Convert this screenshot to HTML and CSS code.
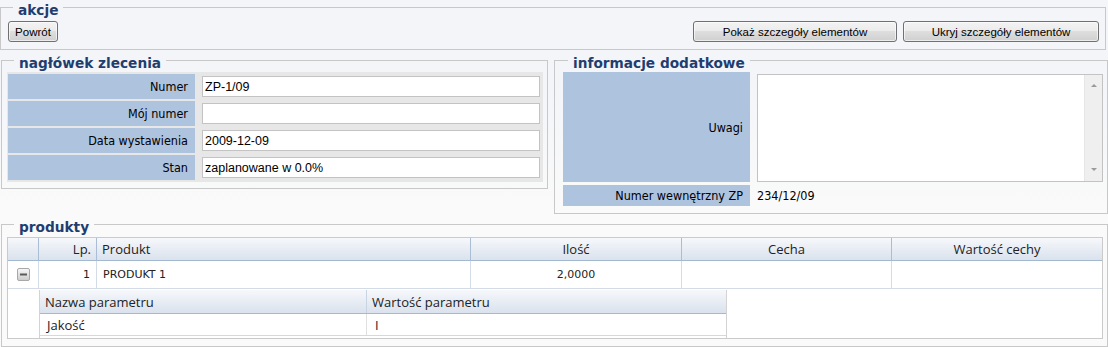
FILE: index.html
```html
<!DOCTYPE html>
<html lang="pl">
<head>
<meta charset="utf-8">
<title>Zlecenie produkcyjne</title>
<link rel="stylesheet" href="styles.css">
</head>
<body>
<div class="page">
  <fieldset class="box box-akcje">
    <legend class="legend">akcje</legend>
    <div class="actions">
      <button class="btn btn-back" type="button">Powrót</button>
      <div class="actions-right">
        <button class="btn btn-show" type="button">Pokaż szczegóły elementów</button>
        <button class="btn btn-hide" type="button">Ukryj szczegóły elementów</button>
      </div>
    </div>
  </fieldset>

  <div class="cols">
    <fieldset class="box box-header">
      <legend class="legend">nagłówek zlecenia</legend>
      <div class="form">
        <div class="lbl">Numer</div>
        <div class="fld"><div class="inp">ZP-1/09</div></div>
        <div class="lbl">Mój numer</div>
        <div class="fld"><div class="inp"></div></div>
        <div class="lbl">Data wystawienia</div>
        <div class="fld"><div class="inp">2009-12-09</div></div>
        <div class="lbl">Stan</div>
        <div class="fld"><div class="inp">zaplanowane w 0.0%</div></div>
      </div>
    </fieldset>

    <fieldset class="box box-info">
      <legend class="legend">informacje dodatkowe</legend>
      <div class="info">
        <div class="lbl lbl-tall">Uwagi</div>
        <div class="ta">
          <div class="sb"><span class="arr-up"></span><span class="arr-down"></span></div>
        </div>
        <div class="lbl lbl-short">Numer wewnętrzny ZP</div>
        <div class="val">234/12/09</div>
      </div>
    </fieldset>
  </div>

  <fieldset class="box box-prod">
    <legend class="legend">produkty</legend>
    <div class="grid">
      <div class="g-row g-head">
        <div class="c"></div>
        <div class="c c-right">Lp.</div>
        <div class="c">Produkt</div>
        <div class="c c-center">Ilość</div>
        <div class="c c-center">Cecha</div>
        <div class="c c-center">Wartość cechy</div>
      </div>
      <div class="g-row g-data">
        <div class="c c-icon">
          <svg class="minus" width="13" height="13" viewBox="0 0 13 13">
            <defs>
              <linearGradient id="mg" x1="0" y1="0" x2="0" y2="1">
                <stop offset="0" stop-color="#f8f8f8"/>
                <stop offset="1" stop-color="#cbcbcb"/>
              </linearGradient>
            </defs>
            <rect x="0.5" y="0.5" width="12" height="12" rx="1.5" fill="url(#mg)" stroke="#a8a8a8"/>
            <rect x="3" y="5.5" width="7" height="2" fill="#5a5a5a"/>
          </svg>
        </div>
        <div class="c c-right">1</div>
        <div class="c">PRODUKT 1</div>
        <div class="c c-center">2,0000</div>
        <div class="c"></div>
        <div class="c"></div>
      </div>
      <div class="g-sub">
        <div class="sub">
          <div class="s-row s-head">
            <div class="c">Nazwa parametru</div>
            <div class="c">Wartość parametru</div>
          </div>
          <div class="s-row s-data">
            <div class="c">Jakość</div>
            <div class="c">I</div>
          </div>
        </div>
      </div>
    </div>
  </fieldset>
</div>
</body>
</html>
```

FILE: styles.css
```css
* { box-sizing: border-box; }

html, body { margin: 0; padding: 0; }

body {
  width: 1108px;
  height: 347px;
  overflow: hidden;
  background: #fafafa linear-gradient(#f3f5f9 0, #f3f5f9 80px, #fafafa 210px) no-repeat;
  font-family: "DejaVu Sans", Verdana, sans-serif;
  font-size: 11px;
  color: #000;
}

/* fieldsets */
.box {
  margin: 0;
  min-width: 0;
  border: 1px solid #c8c8c8;
}

.legend {
  padding: 6px 5px 0;
  font: bold 13.7px/9px "DejaVu Sans", Verdana, sans-serif;
  color: #1f3e70;
}

.box-akcje {
  width: 1106px;
  padding: 6px 6px 7px 7px;
}
.box-akcje .legend { margin-left: 5px; }

.actions {
  display: flex;
  justify-content: space-between;
  align-items: center;
}
.actions-right {
  display: flex;
  gap: 6px;
}

.btn {
  height: 21px;
  padding: 0;
  border: 1px solid #707070;
  border-radius: 3px;
  background: linear-gradient(#f3f3f3 0, #ebebeb 50%, #dedede 50%, #d0d0d0 100%);
  box-shadow: inset 0 0 0 1px rgba(255,255,255,0.6);
  font: 11.5px "Liberation Sans", Arial, sans-serif;
  color: #000;
  text-align: center;
}
.btn-back { width: 50px; }
.btn-show { width: 204px; }
.btn-hide { width: 196px; }

/* two columns */
.cols {
  display: flex;
  align-items: flex-start;
  gap: 6px;
  margin: 3px 0 0 1px;
}

.box-header {
  width: 547px;
  padding: 4px 4px 6px 5px;
}
.box-header .legend { margin-left: 7px; }

.form {
  display: grid;
  grid-template-columns: 187px 1fr;
  row-gap: 2px;
  padding: 2px 3px 2px 1px;
  background: #e7e7e7;
}

.lbl {
  display: flex;
  align-items: center;
  justify-content: flex-end;
  height: 25px;
  padding-right: 7px;
  background: #aec3de;
  font: 12.5px "DejaVu Sans Condensed", "DejaVu Sans", Verdana, sans-serif;
  font-stretch: condensed;
  color: #000;
}

.fld {
  display: flex;
  align-items: center;
  padding-left: 7px;
}

.inp {
  flex: 1;
  height: 21px;
  display: flex;
  align-items: center;
  padding: 0 2px;
  background: #fff;
  border: 1px solid #c3c3c3;
  font: 12.5px "Liberation Sans", Arial, sans-serif;
  color: #000;
}

.box-info {
  flex: 1;
  padding: 4px 4px 7px 8px;
}
.box-info .legend { margin-left: 5px; }

.info {
  display: grid;
  grid-template-columns: 187px 1fr;
  grid-template-rows: 110px 21px;
  column-gap: 7px;
  row-gap: 3px;
}
.lbl-tall { height: 110px; }
.lbl-short { height: 21px; }

.ta {
  margin-top: 2px;
  height: 108px;
  display: flex;
  justify-content: flex-end;
  background: #fff;
  border: 1px solid #c3c3c3;
}
.sb {
  width: 18px;
  display: flex;
  flex-direction: column;
  justify-content: space-between;
  align-items: center;
  padding: 9px 0 10px;
  background: #efefef;
  border-left: 1px solid #e6e6e6;
}
.arr-up {
  width: 0;
  height: 0;
  border-left: 3px solid transparent;
  border-right: 3px solid transparent;
  border-bottom: 3px solid #9a9a9a;
}
.arr-down {
  width: 0;
  height: 0;
  border-left: 3px solid transparent;
  border-right: 3px solid transparent;
  border-top: 3px solid #9a9a9a;
}

.val {
  display: flex;
  align-items: center;
  font: 12.5px "DejaVu Sans Condensed", "DejaVu Sans", Verdana, sans-serif;
  font-stretch: condensed;
  color: #000;
}

/* products */
.box-prod {
  margin: 3px 0 0 1px;
  padding: 5px 4px 7px 5px;
}
.box-prod .legend { margin-left: 7px; }

.grid {
  border: 1px solid #cacaca;
  background: #fff;
}

.g-row {
  display: grid;
  grid-template-columns: 30px 58px 374px 211px 210px 1fr;
}

.c {
  display: flex;
  align-items: center;
  padding: 0 5px;
  white-space: nowrap;
  overflow: hidden;
}
.c-right { justify-content: flex-end; }
.c-center { justify-content: center; }
.c-icon { justify-content: center; padding: 0 0 0 1px; }

.g-head {
  height: 23px;
  background: linear-gradient(#f6f8fb, #dae2ed);
  border-bottom: 1px solid #a3b8d1;
  font: 13px "Open Sans", "Liberation Sans", sans-serif;
  color: #222;
}
.g-head .c + .c { border-left: 1px solid #a9bdd6; }

.g-data {
  height: 28px;
  border-bottom: 1px solid #d3dbe6;
  font: 11px "DejaVu Sans", Verdana, sans-serif;
  color: #222;
}
.g-data .c + .c { border-left: 1px solid #d3dbe6; }
.g-data .c-right { padding-right: 6px; }
.g-data .c:nth-child(3) { padding-left: 6px; }

.g-sub {
  height: 49px;
  padding: 1px 0 0 31px;
}

.sub {
  width: 688px;
  height: 48px;
  border-left: 1px solid #d3d3d3;
  border-right: 1px solid #d3d3d3;
}

.s-row {
  display: grid;
  grid-template-columns: 326px 1fr;
  font: 13px "Open Sans", "Liberation Sans", sans-serif;
  color: #222;
}
.s-head {
  height: 24px;
  background: linear-gradient(#f6f8fb, #dae2ed);
  border-bottom: 1px solid #a3b8d1;
}
.s-head .c + .c { border-left: 1px solid #c9d4e2; }
.s-data {
  height: 22px;
  border-bottom: 1px solid #d8d8d8;
}
.s-data .c { padding-left: 7px; }
.s-data .c + .c { border-left: 1px solid #e0e0e0; padding-left: 8px; }
```
